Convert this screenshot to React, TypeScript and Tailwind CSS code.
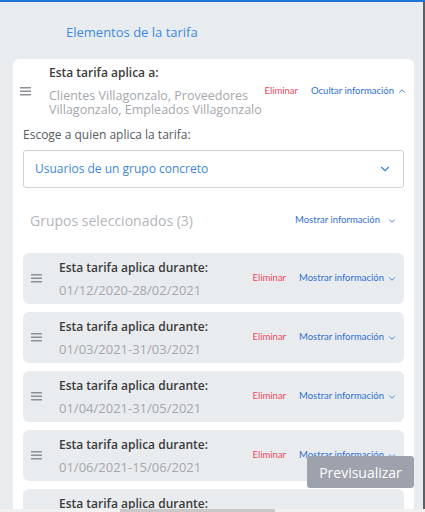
import { ChevronDown, ChevronUp } from "lucide-react";

// ─── Data ─────────────────────────────────────────────────────────────────────
const periods = [
  "01/12/2020-28/02/2021",
  "01/03/2021-31/03/2021",
  "01/04/2021-31/05/2021",
  "01/06/2021-15/06/2021",
  "16/06/2021-30/06/2021",
];

const linkFont = { fontFamily: 'Lato, "Liberation Sans", sans-serif' };

// ─── Small pieces ─────────────────────────────────────────────────────────────
function DragHandle() {
  return (
    <svg width="11" height="9" viewBox="0 0 11 9" className="shrink-0">
      <rect x="0" y="0" width="11" height="1.5" fill="#8d9096" />
      <rect x="0" y="3.5" width="11" height="1.5" fill="#8d9096" />
      <rect x="0" y="7" width="11" height="1.5" fill="#8d9096" />
    </svg>
  );
}

function Actions({ label, open }: { label: string; open?: boolean }) {
  return (
    <div
      className="flex items-center gap-[13px] text-[9.5px] whitespace-nowrap shrink-0"
      style={linkFont}
    >
      <span className="text-[#f0485a]">Eliminar</span>
      <span className="flex items-center gap-[3px] text-[#2d6fd2]">
        {label}
        {open ? (
          <ChevronUp className="w-[10px] h-[10px]" strokeWidth={2} />
        ) : (
          <ChevronDown className="w-[10px] h-[10px]" strokeWidth={2} />
        )}
      </span>
    </div>
  );
}

function PeriodRow({ range }: { range: string }) {
  return (
    <div className="h-[51px] rounded-md bg-[#e9ecef] flex items-center pl-[8px] pr-[7px] shrink-0">
      <DragHandle />
      <div className="ml-[17px] flex-1 min-w-0 flex flex-col">
        <span className="text-[12px] leading-[16px] font-semibold text-[#3b3b3b]">
          Esta tarifa aplica durante:
        </span>
        <span className="mt-[6px] text-[13px] leading-[16px] text-[#a4a7ac]">
          {range}
        </span>
      </div>
      <Actions label="Mostrar información" />
    </div>
  );
}

// ─── Component ────────────────────────────────────────────────────────────────
export default function App() {
  return (
    <div
      className="relative w-[425px] h-[512px] overflow-hidden bg-[#e9ecef] border-t-2 border-[#1d72d6] flex"
      style={{ fontFamily: '"Open Sans", "Liberation Sans", sans-serif' }}
    >
      <div className="flex-1 flex flex-col min-h-0">
        {/* ── Title ── */}
        <div className="shrink-0 pl-[66px] pt-[21px] h-[57px] text-[13px] text-[#3d8ae0]">
          Elementos de la tarifa
        </div>

        {/* ── Card ── */}
        <div className="ml-[13px] mr-[9px] flex-1 bg-white rounded-t-md px-[10px] flex flex-col">
          {/* Header */}
          <div className="flex items-center pt-[6px] shrink-0">
            <div className="ml-[-3px]">
              <DragHandle />
            </div>
            <div className="ml-[18px] flex-1 min-w-0 flex flex-col">
              <span className="text-[12px] leading-[16px] font-semibold text-[#3b3b3b]">
                Esta tarifa aplica a:
              </span>
              <span className="mt-[8px] text-[12.5px] leading-[14px] text-[#a4a7ac] w-[215px]">
                Clientes Villagonzalo, Proveedores Villagonzalo, Empleados
                Villagonzalo
              </span>
            </div>
            <div className="mr-[-3px]">
              <Actions label="Ocultar información" open />
            </div>
          </div>

          {/* Select */}
          <span className="mt-[10px] shrink-0 text-[12px] leading-[16px] text-[#555a60]">
            Escoge a quien aplica la tarifa:
          </span>
          <div className="mt-[7px] shrink-0 h-[38px] border border-[#cfd2d6] rounded-[3px] flex items-center justify-between pl-[11px] pr-[11px]">
            <span className="text-[12px] text-[#3d86dc]">
              Usuarios de un grupo concreto
            </span>
            <ChevronDown className="w-[14px] h-[14px] text-[#3d86dc]" strokeWidth={2} />
          </div>

          {/* Groups */}
          <div className="mt-[22px] shrink-0 flex items-center justify-between pl-[7px] pr-[7px]">
            <span className="text-[14px] text-[#b3b6ba]">
              Grupos seleccionados (3)
            </span>
            <span
              className="flex items-center gap-[7px] text-[9.5px] text-[#2d6fd2]"
              style={linkFont}
            >
              Mostrar información
              <ChevronDown className="w-[10px] h-[10px]" strokeWidth={2} />
            </span>
          </div>

          <div className="mt-[22px] flex flex-col gap-[8px]">
            {periods.map((p) => (
              <PeriodRow key={p} range={p} />
            ))}
          </div>
        </div>
      </div>

      {/* Right edge */}
      <div className="w-[2px] bg-[#5c5f63]" />

      {/* Preview button (floating) */}
      <button className="absolute left-[307px] top-[454px] w-[107px] h-[32px] rounded-[3px] bg-[#9da2ac] text-white text-[14px]">
        Previsualizar
      </button>

      {/* Horizontal scrollbar */}
      <div className="absolute left-0 right-0 bottom-0 h-[3px] bg-[#f1f1f1]">
        <div className="ml-[120px] w-[155px] h-full bg-[#c8c8c8]" />
      </div>
    </div>
  );
}
